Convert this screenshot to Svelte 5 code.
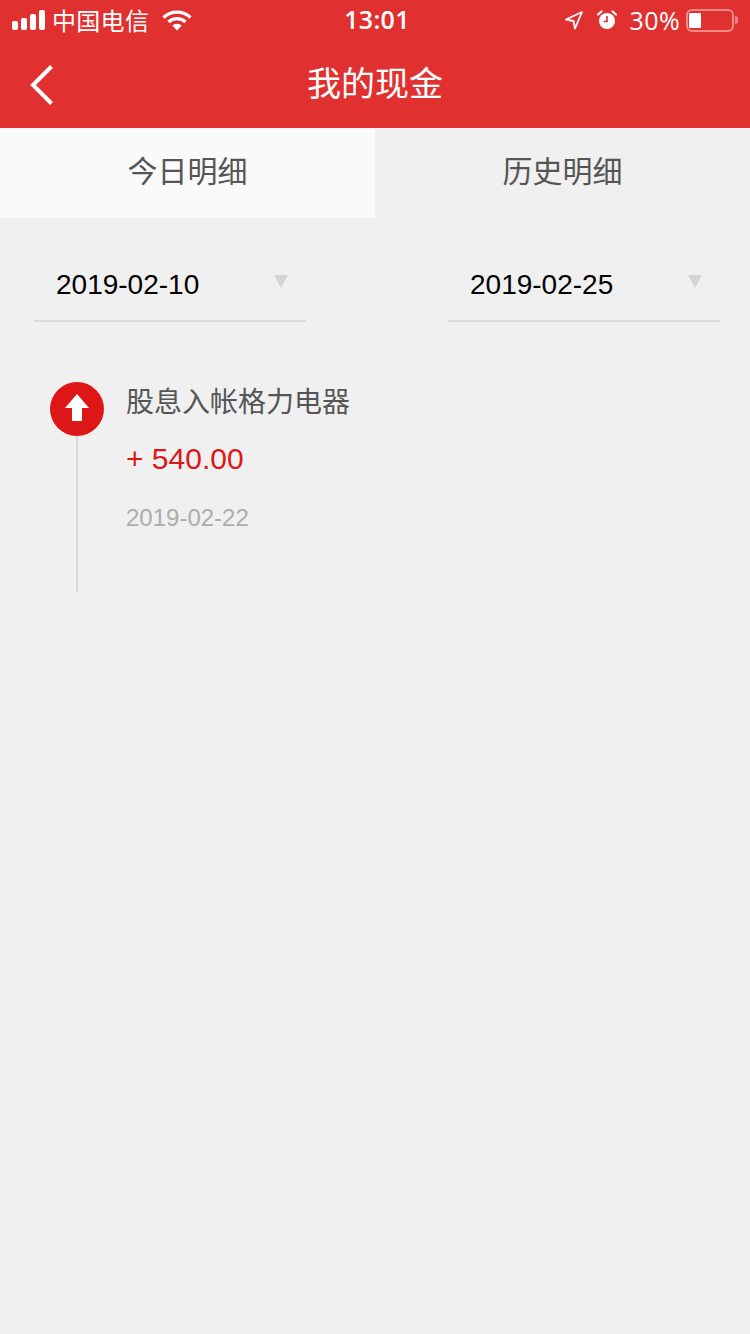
<script lang="ts">
  const tabs = [
    { label: '今日明细', active: true },
    { label: '历史明细', active: false }
  ];
  const dates = ['2019-02-10', '2019-02-25'];
</script>

<div class="page">
  <header class="top">
    <div class="status">
      <div class="status-left">
        <span class="signal"><i></i><i></i><i></i><i></i></span>
        <span class="carrier">中国电信</span>
        <svg class="wifi" width="30" height="22" viewBox="0 0 30 22">
          <path d="M1.500 8.500a19.500 19.500 0 0 1 27 0" fill="none" stroke="#fff" stroke-width="3.200"/>
          <path d="M6.500 13a12.500 12.500 0 0 1 17 0" fill="none" stroke="#fff" stroke-width="3.200"/>
          <path d="M10.200 16.600a7.500 7.500 0 0 1 9.600 0L15 21.500z" fill="#fff"/>
        </svg>
      </div>
      <div class="clock">13:01</div>
      <div class="status-right">
        <svg class="loc" width="20" height="20" viewBox="0 0 20 20">
          <path d="M18 2 2 9.500l7.500 1.500 1.500 7.500z" fill="none" stroke="#fff" stroke-width="1.800" stroke-linejoin="round"/>
        </svg>
        <svg class="alarm" width="22" height="22" viewBox="0 0 22 22">
          <circle cx="11" cy="12" r="8" fill="#fff"/>
          <path d="M11 7v5.500H7.500" fill="none" stroke="#e03131" stroke-width="1.600"/>
          <path d="M2 5.500 5.500 2.500M20 5.500 16.500 2.500" stroke="#fff" stroke-width="2.200" stroke-linecap="round"/>
        </svg>
        <span class="pct">30%</span>
        <span class="battery"><span class="level"></span></span>
        <span class="nub"></span>
      </div>
    </div>
    <div class="nav">
      <svg class="back" width="28" height="42" viewBox="0 0 28 42">
        <path d="M23.500 2.500 5 21l18.500 18.500" fill="none" stroke="#fff" stroke-width="4"/>
      </svg>
      <h1>我的现金</h1>
    </div>
  </header>

  <div class="tabs">
    {#each tabs as tab}
      <div class="tab" class:active={tab.active}>{tab.label}</div>
    {/each}
  </div>

  <div class="filters">
    {#each dates as date}
      <div class="picker">
        <span>{date}</span>
        <i class="caret"></i>
      </div>
    {/each}
  </div>

  <div class="entry">
    <div class="rail">
      <span class="dot">
        <svg width="24" height="28" viewBox="0 0 24 28">
          <path d="M12 0 24 14h-7v13H7V14H0z" fill="#fff"/>
        </svg>
      </span>
      <span class="line"></span>
    </div>
    <div class="body">
      <div class="title">股息入帐格力电器</div>
      <div class="amount">+ 540.00</div>
      <div class="date">2019-02-22</div>
    </div>
  </div>
</div>

<style>
  :global(body) {
    margin: 0;
    background: #f0f0f0;
  }

  .page {
    min-height: 1334px;
    background: #f0f0f0;
    font-family: "Liberation Sans", "Noto Sans CJK SC", sans-serif;
    overflow: hidden;
  }

  .top {
    background: #e03130;
    color: #fff;
    height: 128px;
  }

  .status {
    height: 40px;
    display: grid;
    grid-template-columns: 1fr auto 1fr;
    align-items: center;
    padding: 0 12px;
  }

  .status-left,
  .status-right {
    display: flex;
    align-items: center;
  }

  .status-right {
    justify-content: flex-end;
  }

  .signal {
    display: flex;
    align-items: flex-end;
    gap: 3px;
    margin-right: 8px;
  }

  .signal i {
    width: 6px;
    background: #fff;
    border-radius: 2px;
  }

  .signal i:nth-child(1) { height: 9px; }
  .signal i:nth-child(2) { height: 12px; }
  .signal i:nth-child(3) { height: 16px; }
  .signal i:nth-child(4) { height: 20px; }

  .carrier {
    font-size: 24px;
    letter-spacing: 0.3px;
    margin-top: -2px;
    margin-left: -1px;
  }

  .wifi {
    margin-left: 13px;
    margin-top: -1px;
  }

  .clock {
    font-size: 25px;
    font-family: "Open Sans", sans-serif;
    font-weight: 600;
    letter-spacing: 0.3px;
    margin: -2px 0 0 4px;
  }

  .alarm {
    margin-left: 12px;
    margin-top: -1px;
  }

  .pct {
    font-family: "Open Sans", sans-serif;
    font-size: 25px;
    letter-spacing: 0.4px;
    margin-left: 12px;
    margin-right: 6px;
  }

  .battery {
    width: 48px;
    height: 23px;
    box-sizing: border-box;
    border: 2px solid #f08a8a;
    border-radius: 6px;
    padding: 2px 1px;
    display: flex;
  }

  .level {
    width: 12px;
    background: #fff;
    border-radius: 1px;
  }

  .nub {
    width: 3px;
    height: 8px;
    margin-left: 1px;
    background: #f08a8a;
    border-radius: 0 3px 3px 0;
  }

  .nav {
    height: 88px;
    position: relative;
    display: flex;
    align-items: center;
    justify-content: center;
  }

  .nav h1 {
    margin: -6px 0 0;
    font-size: 34px;
    font-weight: 400;
  }

  .back {
    position: absolute;
    left: 28px;
    top: 24px;
  }

  .tabs {
    display: grid;
    grid-template-columns: 1fr 1fr;
    height: 90px;
  }

  .tab {
    display: flex;
    align-items: center;
    justify-content: center;
    font-size: 30px;
    color: #555;
    padding-bottom: 8px;
    box-sizing: border-box;
  }

  .tab.active {
    background: #fafafa;
  }

  .filters {
    display: flex;
    justify-content: space-between;
    padding: 32px 30px 0 34px;
  }

  .picker {
    width: 272px;
    height: 72px;
    box-sizing: border-box;
    border-bottom: 2px solid #dadada;
    padding-left: 22px;
    position: relative;
    font-size: 28px;
    color: #000;
    display: flex;
    align-items: center;
  }

  .caret {
    position: absolute;
    right: 18px;
    top: 25px;
    border-left: 7px solid transparent;
    border-right: 7px solid transparent;
    border-top: 13px solid #d4d4d4;
  }

  .entry {
    display: flex;
    padding: 60px 0 0 50px;
  }

  .rail {
    width: 54px;
    display: flex;
    flex-direction: column;
    align-items: center;
  }

  .dot {
    width: 54px;
    height: 54px;
    border-radius: 50%;
    background: #dd1717;
    display: flex;
    align-items: center;
    justify-content: center;
  }

  .dot svg {
    margin-top: -2px;
  }

  .line {
    width: 2px;
    height: 156px;
    background: #dadada;
  }

  .body {
    margin-left: 22px;
    padding-top: 1px;
  }

  .title {
    font-size: 28px;
    line-height: 40px;
    color: #555;
  }

  .amount {
    margin-top: 16px;
    font-size: 30px;
    line-height: 40px;
    color: #dd1717;
  }

  .date {
    margin-top: 20px;
    font-size: 24px;
    line-height: 38px;
    color: #acacac;
  }
</style>
